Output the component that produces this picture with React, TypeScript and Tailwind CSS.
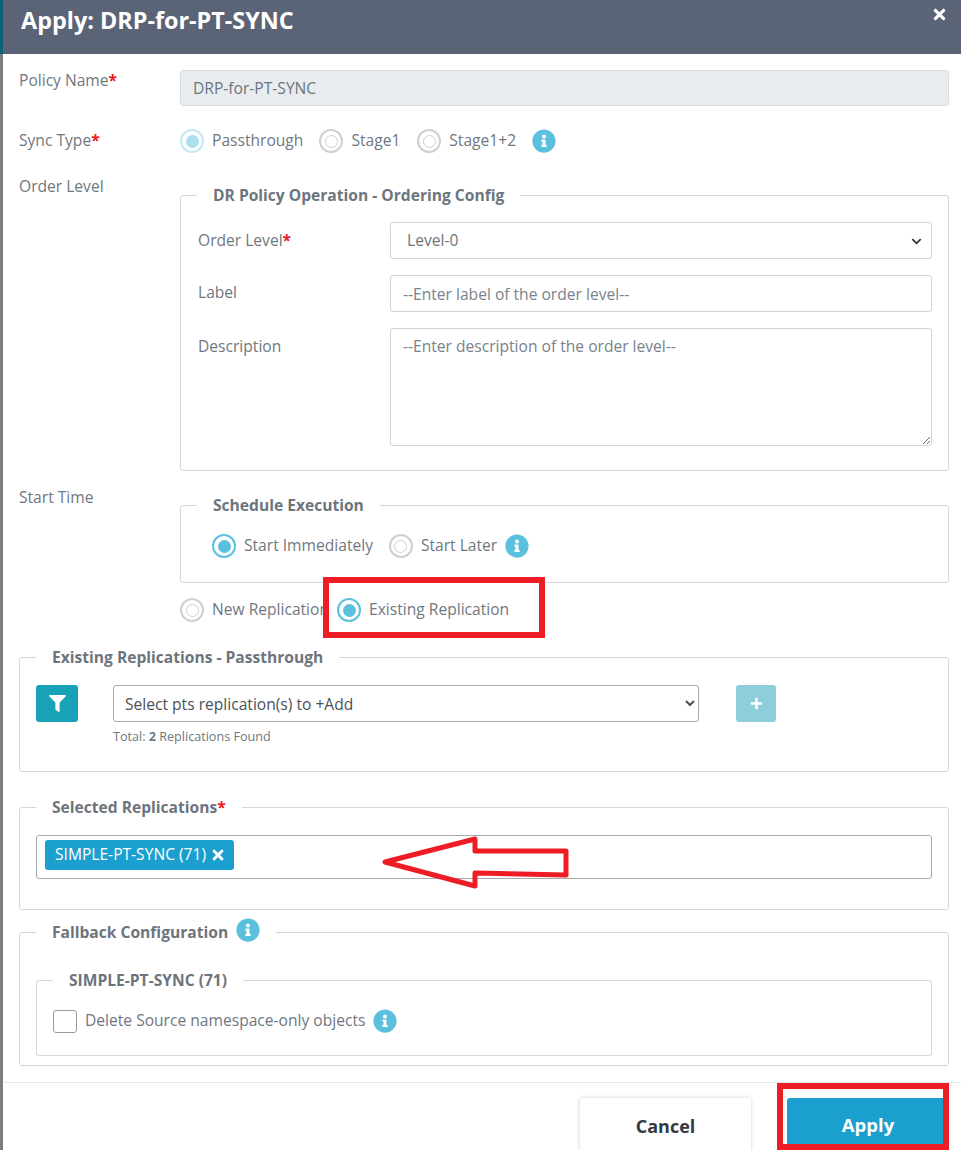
import React from "react";
import { FaFilter, FaInfoCircle, FaPlus, FaTimes, FaChevronDown } from "react-icons/fa";

const Star = () => <span className="text-[#f01818] font-bold">*</span>;

const Info = () => <FaInfoCircle className="text-[#5bc0de] text-[24px] shrink-0" />;

type RadioProps = { label: string; state?: "on" | "off" | "faded"; className?: string };

const Radio = ({ label, state = "off", className = "" }: RadioProps) => (
  <label className={`flex items-center gap-[8px] ${className}`}>
    {state === "on" && (
      <span className="flex items-center justify-center w-[24px] h-[24px] rounded-full border-2 border-[#5bc0de] shrink-0">
        <span className="w-[13px] h-[13px] rounded-full bg-[#5bc0de]" />
      </span>
    )}
    {state === "faded" && (
      <span className="flex items-center justify-center w-[24px] h-[24px] rounded-full border-2 border-[#c4e8f3] shrink-0">
        <span className="w-[13px] h-[13px] rounded-full bg-[#a9dfef]" />
      </span>
    )}
    {state === "off" && (
      <span className="flex items-center justify-center w-[24px] h-[24px] rounded-full border-2 border-[#cfcfcf] shrink-0">
        <span className="w-[13px] h-[13px] rounded-full border border-[#cfcfcf] bg-white" />
      </span>
    )}
    <span className="whitespace-nowrap">{label}</span>
  </label>
);

const Group = ({
  title,
  className = "",
  children,
}: {
  title: React.ReactNode;
  className?: string;
  children: React.ReactNode;
}) => (
  <fieldset className={`border border-[#d3d6da] rounded-[3px] ${className}`}>
    <legend className="ml-[16px] px-[16px] h-[24px] pt-[2px] flex items-center gap-[8px] font-bold text-[15.6px] text-[#6c757d]">
      {title}
    </legend>
    {children}
  </fieldset>
);

export default function App() {
  return (
    <div className="relative h-[1150px] w-[961px] overflow-hidden bg-white flex text-[15.6px] text-[#6f7780] font-['Open_Sans',sans-serif]">
      {/* backdrop strip on the left */}
      <div className="w-[3px] shrink-0 flex flex-col bg-[#7d7d7d]">
        <div className="h-[54px] bg-[#0d5f73]" />
      </div>

      <div className="flex-1 flex flex-col min-w-0">
        <header className="h-[54px] shrink-0 bg-[#5b6377] flex justify-between pl-[18px] pr-[13px]">
          <h1 className="mt-[3px] text-[23.4px] leading-[34px] font-bold text-white">Apply: DRP-for-PT-SYNC</h1>
          <FaTimes className="mt-[6px] text-white text-[17px]" />
        </header>

        <div className="flex-1 pl-[16px] pr-[12px] pt-[16px]">
          <div className="grid grid-cols-[161px_1fr] items-start">
            <span className="leading-[20px]">
              Policy Name
              <Star />
            </span>
            <input
              readOnly
              value="DRP-for-PT-SYNC"
              className="h-[36px] w-full rounded-[3px] border border-[#d9dde1] bg-[#e9ecef] px-[12px] text-[#6c757d]"
            />
          </div>

          <div className="mt-[22px] grid grid-cols-[161px_1fr] items-center h-[26px]">
            <span>
              Sync Type
              <Star />
            </span>
            <div className="flex items-center">
              <Radio label="Passthrough" state="faded" />
              <Radio label="Stage1" className="ml-[16px]" />
              <Radio label="Stage1+2" className="ml-[17px]" />
              <span className="ml-[16px]">
                <Info />
              </span>
            </div>
          </div>

          <div className="mt-[11px] grid grid-cols-[161px_1fr] items-start">
            <span className="leading-[20px] mt-[11px]">Order Level</span>
            <Group title="DR Policy Operation - Ordering Config" className="h-[288px] mt-[18px]">
              <div className="grid grid-cols-[192px_1fr] pl-[17px] pr-[16px] pt-[15px] gap-y-[16px]">
                <span className="leading-[37px]">
                  Order Level
                  <Star />
                </span>
                <div className="relative">
                  <select className="h-[37px] w-full appearance-none rounded-[3px] border border-[#ced4da] bg-white pl-[16px] text-[#6c757d]">
                    <option>Level-0</option>
                  </select>
                  <FaChevronDown className="absolute right-[10px] top-[14px] text-[11px] text-[#343a40]" />
                </div>
                <span className="leading-[34px]">Label</span>
                <input
                  placeholder="--Enter label of the order level--"
                  className="h-[37px] w-full rounded-[3px] border border-[#ced4da] pl-[12px] placeholder:text-[#7a828a]"
                />
                <span className="leading-[36px]">Description</span>
                <textarea
                  placeholder="--Enter description of the order level--"
                  className="block h-[118px] w-full rounded-[3px] border border-[#ced4da] pl-[12px] pt-[6px] placeholder:text-[#7a828a]"
                />
              </div>
            </Group>
          </div>

          <div className="mt-[16px] grid grid-cols-[161px_1fr] items-start">
            <span className="leading-[20px]">Start Time</span>
            <Group title="Schedule Execution" className="h-[90px] mt-[6px]">
              <div className="flex items-center pl-[31px] pt-[17px]">
                <Radio label="Start Immediately" state="on" />
                <Radio label="Start Later" className="ml-[16px]" />
                <span className="ml-[8px]">
                  <Info />
                </span>
              </div>
            </Group>
          </div>

          <div className="mt-[14px] pl-[161px] flex items-center h-[26px]">
            <Radio label="New Replication" />
            <Radio label="Existing Replication" state="on" className="ml-[8px]" />
          </div>

          <Group title="Existing Replications - Passthrough" className="h-[127px] mt-[22px]">
            <div className="flex items-start pl-[16px] pt-[16px]">
              <button className="w-[42px] h-[37px] rounded-[3px] bg-[#17a2b8] flex items-center justify-center text-white text-[17px]">
                <FaFilter />
              </button>
              <div className="ml-[35px] w-[586px]">
                <select className="h-[37px] w-full rounded-[3px] border border-[#a9a9a9] bg-white pl-[7px] text-[#495057]">
                  <option>Select pts replication(s) to +Add</option>
                </select>
                <p className="mt-[7px] text-[12.6px] leading-[16px]">
                  Total: <b>2</b> Replications Found
                </p>
              </div>
              <button className="ml-[37px] w-[40px] h-[37px] rounded-[3px] bg-[#8ccfdb] flex items-center justify-center text-white text-[13px]">
                <FaPlus />
              </button>
            </div>
          </Group>

          <Group
            title={
              <span>
                Selected Replications
                <Star />
              </span>
            }
            className="h-[115px] mt-[23px]"
          >
            <div className="mx-[16px] mt-[16px] h-[44px] rounded-[3px] border border-[#a9a9a9] pl-[8px] pt-[4px]">
              <span className="inline-flex items-center gap-[4px] h-[30px] w-[189px] rounded-[3px] bg-[#1b9fcf] pl-[10px] text-white">
                SIMPLE-PT-SYNC (71)
                <FaTimes className="text-[16px]" />
              </span>
            </div>
          </Group>

          <Group
            title={
              <>
                Fallback Configuration
                <span className="-mt-[7px]">
                  <Info />
                </span>
              </>
            }
            className="h-[146px] mt-[10px]"
          >
            <Group title="SIMPLE-PT-SYNC (71)" className="mx-[16px] mt-[24px] h-[88px]">
              <div className="flex items-center pl-[16px] pt-[17px]">
                <span className="w-[24px] h-[23px] rounded-[3px] border border-[#9a9a9a] bg-white" />
                <span className="ml-[8px]">Delete Source namespace-only objects</span>
                <span className="ml-[8px]">
                  <Info />
                </span>
              </div>
            </Group>
          </Group>
        </div>

        <footer className="h-[68px] shrink-0 border-t border-[#e6e8ec] flex items-start pt-[15px] pl-[577px]">
          <button className="w-[171px] h-[60px] pb-[4px] rounded-[3px] bg-white shadow-[0_0_4px_rgba(0,0,0,0.18)] font-bold text-[#343a40] text-[18px]">
            Cancel
          </button>
          <button className="ml-[36px] w-[162px] h-[60px] pb-[6px] rounded-[3px] bg-[#1b9fcf] font-bold text-white text-[18.5px]">
            Apply
          </button>
        </footer>
      </div>

      {/* annotations drawn over the screenshot */}
      <div className="absolute left-[323px] top-[577px] w-[222px] h-[61px] border-[6px] border-[#ee1c25]" />
      <div className="absolute left-[777px] top-[1083px] w-[172px] h-[67px] border-[6px] border-[#ee1c25]" />
      <svg className="absolute left-[375px] top-[831px] w-[200px] h-[62px]" viewBox="0 0 200 62" fill="none">
        <path
          d="M10 31 L100 8 V20 L191 20 V44 L100 42 V55 Z"
          stroke="#ee1c25"
          strokeWidth="5"
          strokeLinejoin="round"
        />
      </svg>
    </div>
  );
}
